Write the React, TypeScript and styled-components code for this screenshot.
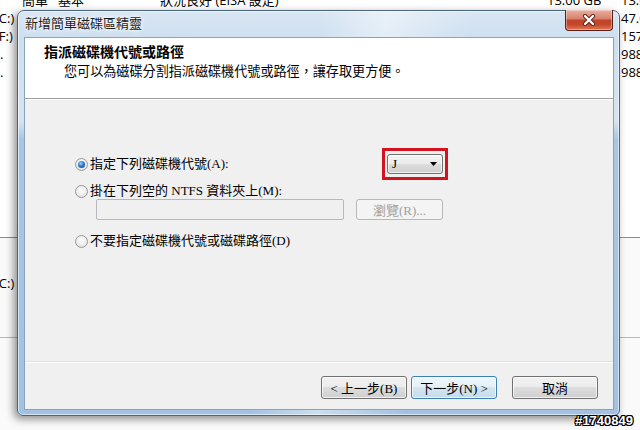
import React from "react";
import styled, { createGlobalStyle } from "styled-components";

const Global = createGlobalStyle`
  html, body { margin: 0; padding: 0; }
  body { width: 640px; height: 430px; overflow: hidden; background: #fff; }
`;

const UI = `"Open Sans", "Noto Sans CJK TC", sans-serif`;
const MING = `"Liberation Serif", "Noto Sans CJK TC", serif`;

const Screen = styled.div`
  position: relative;
  width: 640px;
  height: 430px;
  overflow: hidden;
  background: #ffffff;
  font-family: ${UI};
  color: #000;
`;

/* ---------- background: disk management window ---------- */
const Backdrop = styled.div`
  display: flex;
  flex-direction: column;
  height: 100%;
`;

const ListPane = styled.div`
  height: 237px;
  display: flex;
  flex-direction: column;
  background: #fff;
  overflow: hidden;
`;

const ListRows = styled.div`
  display: flex;
  flex-direction: column;
  margin-top: -9px;
`;

const ListRow = styled.div`
  display: grid;
  grid-template-columns: 22px 36px 102px 387px 74px 1fr;
  height: 18px;
  align-items: center;
  font-size: 13px;
  line-height: 18px;
  white-space: nowrap;
`;

const Cell = styled.span<{ $shift?: number }>`
  overflow: visible;
  margin-left: ${(p) => p.$shift ?? 0}px;
`;

const Splitter = styled.div<{ $tone: string }>`
  height: 1px;
  background: ${(p) => p.$tone};
`;

const GraphPane = styled.div<{ $h?: number }>`
  height: ${(p) => (p.$h ? `${p.$h}px` : "auto")};
  flex: ${(p) => (p.$h ? "none" : "1")};
  background: #fafafa;
  display: flex;
  flex-direction: column;
  padding-top: 36px;
  font-size: 13px;
  line-height: 18px;
  box-sizing: border-box;
`;

/* ---------- dialog window ---------- */
const Dialog = styled.div`
  position: absolute;
  left: 17px;
  top: 10px;
  width: 603px;
  height: 406px;
  box-sizing: border-box;
  border: 1px solid #4a6582;
  border-radius: 7px 7px 6px 6px;
  background:
    linear-gradient(100deg, rgba(255,255,255,0) 45%, rgba(255,255,255,0.45) 55%, rgba(255,255,255,0) 68%),
    linear-gradient(180deg, #d9e6f3 0px, #cddff0 28px, #d6e4f2 110px, #a9c6e3 128px, #a3c2e2 100%);
  box-shadow: -3px 3px 9px rgba(0, 0, 0, 0.45), inset 0 0 0 1px rgba(255,255,255,0.55);
  padding: 0 6px 6px 7px;
  display: flex;
  flex-direction: column;
`;

const TitleBar = styled.div`
  height: 27px;
  display: flex;
  justify-content: space-between;
  align-items: flex-start;
`;

const TitleText = styled.span`
  font-family: ${UI};
  font-size: 13px;
  line-height: 22px;
  margin-top: 1px;
  color: #1b1b1b;
  text-shadow: 0 0 6px #fff, 0 0 3px #fff;
`;

const CloseButton = styled.div`
  width: 48px;
  height: 21px;
  margin-top: -1px;
  box-sizing: border-box;
  border: 1px solid #5b2217;
  border-top: none;
  border-radius: 0 0 4px 4px;
  background: linear-gradient(180deg, #e9b0a0 0%, #d88470 42%, #c0452c 52%, #c4462c 72%, #e07a55 100%);
  box-shadow: inset 0 0 0 1px rgba(255, 255, 255, 0.35);
  display: flex;
  align-items: center;
  justify-content: center;
`;

const Client = styled.div`
  flex: 1;
  display: flex;
  flex-direction: column;
  background: #f0f0f0;
  box-shadow: 0 0 0 1px #8aa3bd;
`;

const Header = styled.div`
  height: 61px;
  box-sizing: border-box;
  background: #fff;
  border-bottom: 1px solid #a0a0a0;
  padding: 5px 0 0 19px;
  display: flex;
  flex-direction: column;
  gap: 4px;
`;

const HeaderTitle = styled.div`
  font-family: ${UI};
  font-weight: 700;
  font-size: 14px;
  line-height: 17px;
`;

const HeaderSub = styled.div`
  font-family: ${MING};
  font-size: 13.1px;
  line-height: 16px;
  padding-left: 20px;
`;

const Body = styled.div`
  flex: 1;
  border-top: 1px solid #ffffff;
  padding: 48px 0 0 50px;
  display: flex;
  flex-direction: column;
`;

const OptionRow = styled.div<{ $gapTop?: number }>`
  display: flex;
  align-items: center;
  margin-top: ${(p) => p.$gapTop ?? 0}px;
`;

const OptionLabel = styled.label<{ $width?: number }>`
  display: flex;
  align-items: center;
  gap: 2px;
  font-family: ${MING};
  font-size: 13px;
  line-height: 16px;
  width: ${(p) => (p.$width ? `${p.$width}px` : "auto")};
`;

const RadioCircle = styled.span<{ $checked?: boolean }>`
  width: 13px;
  height: 13px;
  box-sizing: border-box;
  border-radius: 50%;
  border: 1px solid #9a9a9a;
  background: radial-gradient(circle at 50% 40%, #ffffff 0%, #ececec 55%, #d2d2d2 100%);
  display: inline-flex;
  align-items: center;
  justify-content: center;
  flex-shrink: 0;
  &::after {
    content: "";
    width: 7px;
    height: 7px;
    border-radius: 50%;
    display: ${(p) => (p.$checked ? "block" : "none")};
    background: radial-gradient(circle at 40% 35%, #a9d6ff 0%, #2f79cc 45%, #0c3a82 100%);
  }
`;

const Highlight = styled.div`
  border: 3px solid #d4141c;
  padding: 3px 2px;
  display: flex;
`;

const Combo = styled.div`
  width: 56px;
  height: 20px;
  box-sizing: border-box;
  border: 1px solid #707070;
  border-radius: 3px;
  background: linear-gradient(180deg, #f2f2f2 0%, #ebebeb 50%, #dddddd 50%, #cfcfcf 100%);
  box-shadow: inset 0 0 0 1px rgba(255, 255, 255, 0.7);
  display: flex;
  align-items: center;
  justify-content: space-between;
  padding: 0 5px 0 4px;
  font-family: ${MING};
  font-size: 13px;
`;

const PathRow = styled.div`
  display: flex;
  gap: 12px;
  margin: 0 0 0 21px;
`;

const PathInput = styled.div`
  width: 248px;
  height: 21px;
  box-sizing: border-box;
  border: 1px solid #b5b9bd;
  border-radius: 2px;
  background: #f0f0f0;
`;

const Button = styled.div<{ $width?: number; $default?: boolean; $disabled?: boolean }>`
  width: ${(p) => p.$width ?? 86}px;
  height: ${(p) => (p.$disabled ? 21 : 23)}px;
  box-sizing: border-box;
  border: 1px solid ${(p) => (p.$disabled ? "#b5b9bd" : p.$default ? "#3c7fb1" : "#707070")};
  border-radius: 3px;
  background: ${(p) =>
    p.$disabled
      ? "#f4f4f4"
      : p.$default
      ? "linear-gradient(180deg, #eef6fb 0%, #e3eff7 50%, #d3e5f1 50%, #c6dcec 100%)"
      : "linear-gradient(180deg, #f2f2f2 0%, #ebebeb 50%, #dddddd 50%, #cfcfcf 100%)"};
  box-shadow: ${(p) => (p.$disabled ? "none" : "inset 0 0 0 1px rgba(255,255,255,0.7)")};
  color: ${(p) => (p.$disabled ? "#a0a0a0" : "#000")};
  font-family: ${MING};
  font-size: 13px;
  display: flex;
  align-items: center;
  justify-content: center;
`;

const Footer = styled.div`
  height: 48px;
  box-sizing: border-box;
  border-top: 1px solid #dfdfdf;
  box-shadow: inset 0 1px 0 #ffffff;
  padding: 14px 15px 0 0;
  display: flex;
  justify-content: flex-end;
`;

const NavGroup = styled.div`
  display: flex;
  gap: 4px;
  margin-right: 15px;
`;

const Watermark = styled.div`
  position: absolute;
  right: 7px;
  bottom: 2px;
  font-family: "Liberation Sans", sans-serif;
  font-weight: 700;
  font-size: 13px;
  line-height: 15px;
  color: #fff;
  text-shadow: 1px 0 0 #000, -1px 0 0 #000, 0 1px 0 #000, 0 -1px 0 #000,
    1px 1px 0 #000, -1px -1px 0 #000, 1px -1px 0 #000, -1px 1px 0 #000;
`;

/* Only the parts of the list that are not hidden behind the dialog. */
const rows: { left: string; shift: number; right: string }[] = [
  { left: "(C:)", shift: -5, right: "47.00 GB" },
  { left: "(F:)", shift: -5, right: "157.00 GB" },
  { left: "新增.", shift: -26, right: "988 MB" },
  { left: "新增.", shift: -26, right: "988 MB" },
];

function Radio({ checked, children, width }: { checked?: boolean; children: React.ReactNode; width?: number }) {
  return (
    <OptionLabel $width={width}>
      <RadioCircle $checked={checked} />
      <span>{children}</span>
    </OptionLabel>
  );
}

export default function App() {
  return (
    <Screen>
      <Global />
      <Backdrop>
        <ListPane>
          <ListRows>
            <ListRow>
              <Cell />
              <Cell>簡單</Cell>
              <Cell>基本</Cell>
              <Cell>狀況良好 (EISA 設定)</Cell>
              <Cell>13.00 GB</Cell>
              <Cell>13.00 GB</Cell>
            </ListRow>
            {rows.map((r, i) => (
              <ListRow key={i}>
                <Cell $shift={r.shift}>{r.left}</Cell>
                <Cell />
                <Cell />
                <Cell />
                <Cell />
                <Cell>{r.right}</Cell>
              </ListRow>
            ))}
          </ListRows>
        </ListPane>
        <Splitter $tone="#8c8c8c" />
        <GraphPane $h={99}>
          <ListRow>
            <Cell $shift={-5}>(C:)</Cell>
          </ListRow>
        </GraphPane>
        <Splitter $tone="#b8b8b8" />
        <GraphPane />
      </Backdrop>

      <Dialog>
        <TitleBar>
          <TitleText>新增簡單磁碟區精靈</TitleText>
          <CloseButton>
            <svg width="14" height="12" viewBox="0 0 14 12">
              <path d="M3 2 L11 10 M11 2 L3 10" stroke="#5a2418" strokeWidth="4.2" strokeLinecap="round" />
              <path d="M3 2 L11 10 M11 2 L3 10" stroke="#ffffff" strokeWidth="2.4" strokeLinecap="round" />
            </svg>
          </CloseButton>
        </TitleBar>
        <Client>
          <Header>
            <HeaderTitle>指派磁碟機代號或路徑</HeaderTitle>
            <HeaderSub>您可以為磁碟分割指派磁碟機代號或路徑，讓存取更方便。</HeaderSub>
          </Header>
          <Body>
            <OptionRow>
              <Radio checked width={307}>指定下列磁碟機代號(A):</Radio>
              <Highlight>
                <Combo>
                  <span>J</span>
                  <svg width="7" height="4" viewBox="0 0 7 4">
                    <path d="M0 0 H7 L3.5 4 Z" fill="#000" />
                  </svg>
                </Combo>
              </Highlight>
            </OptionRow>
            <OptionRow $gapTop={3}>
              <Radio>掛在下列空的 NTFS 資料夾上(M):</Radio>
            </OptionRow>
            <PathRow>
              <PathInput />
              <Button $width={87} $disabled>瀏覽(R)...</Button>
            </PathRow>
            <OptionRow $gapTop={13}>
              <Radio>不要指定磁碟機代號或磁碟路徑(D)</Radio>
            </OptionRow>
          </Body>
          <Footer>
            <NavGroup>
              <Button>&lt; 上一步(B)</Button>
              <Button $default>下一步(N) &gt;</Button>
            </NavGroup>
            <Button>取消</Button>
          </Footer>
        </Client>
      </Dialog>
      <Watermark>#1740849</Watermark>
    </Screen>
  );
}
